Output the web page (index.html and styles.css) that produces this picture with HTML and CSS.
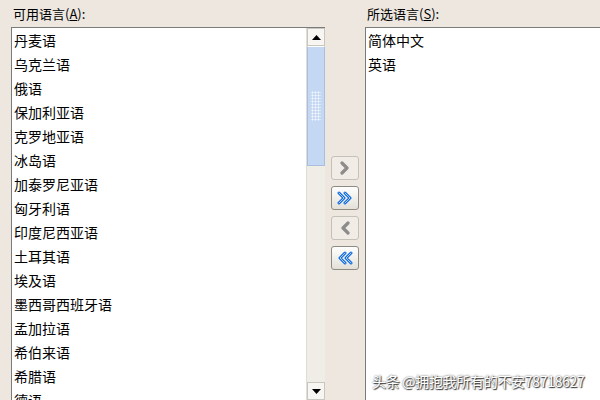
FILE: index.html
```html
<!DOCTYPE html>
<html lang="zh">

<head>
    <meta charset="UTF-8">
    <meta name="viewport" content="width=device-width, initial-scale=1.0">
    <title>语言</title>
    <link rel="stylesheet" href="styles.css">
</head>

<body>
    <div class="dialog">
        <div class="panel left">
            <div class="label">可用语言(<u>A</u>):</div>
            <div class="listbox">
                <ul class="items">
                    <li>丹麦语</li>
                    <li>乌克兰语</li>
                    <li>俄语</li>
                    <li>保加利亚语</li>
                    <li>克罗地亚语</li>
                    <li>冰岛语</li>
                    <li>加泰罗尼亚语</li>
                    <li>匈牙利语</li>
                    <li>印度尼西亚语</li>
                    <li>土耳其语</li>
                    <li>埃及语</li>
                    <li>墨西哥西班牙语</li>
                    <li>孟加拉语</li>
                    <li>希伯来语</li>
                    <li>希腊语</li>
                    <li>德语</li>
                </ul>
                <div class="scrollbar">
                    <div class="sb-btn">
                        <svg width="9" height="5" viewBox="0 0 9 5"><path d="M0 5 L4.5 0 L9 5 Z" fill="#000"/></svg>
                    </div>
                    <div class="thumb">
                        <div class="grip"></div>
                    </div>
                    <div class="track"></div>
                    <div class="sb-btn">
                        <svg width="9" height="5" viewBox="0 0 9 5"><path d="M0 0 L4.5 5 L9 0 Z" fill="#000"/></svg>
                    </div>
                </div>
            </div>
        </div>

        <div class="buttons">
            <div class="btn off">
                <svg width="14" height="14" viewBox="0 0 14 14"><path d="M4 2 L9 7 L4 12" fill="none" stroke="#8c8c8c" stroke-width="3.2" stroke-linejoin="round" stroke-linecap="round"/></svg>
            </div>
            <div class="btn on">
                <svg width="18" height="14" viewBox="0 0 18 14"><path d="M3 2 L8 7 L3 12 M9 2 L14 7 L9 12" fill="none" stroke="#1a6fe0" stroke-width="3" stroke-linejoin="round" stroke-linecap="round"/><path d="M3 2 L8 7 L3 12 M9 2 L14 7 L9 12" fill="none" stroke="#9fd0ff" stroke-width="1" stroke-linejoin="round" stroke-linecap="round"/></svg>
            </div>
            <div class="btn off">
                <svg width="14" height="14" viewBox="0 0 14 14"><path d="M10 2 L5 7 L10 12" fill="none" stroke="#8c8c8c" stroke-width="3.2" stroke-linejoin="round" stroke-linecap="round"/></svg>
            </div>
            <div class="btn on">
                <svg width="18" height="14" viewBox="0 0 18 14"><path d="M15 2 L10 7 L15 12 M9 2 L4 7 L9 12" fill="none" stroke="#1a6fe0" stroke-width="3" stroke-linejoin="round" stroke-linecap="round"/><path d="M15 2 L10 7 L15 12 M9 2 L4 7 L9 12" fill="none" stroke="#9fd0ff" stroke-width="1" stroke-linejoin="round" stroke-linecap="round"/></svg>
            </div>
        </div>

        <div class="panel right">
            <div class="label">所选语言(<u>S</u>):</div>
            <div class="listbox">
                <ul class="items">
                    <li>简体中文</li>
                    <li>英语</li>
                </ul>
            </div>
        </div>
    </div>

    <div class="watermark">头条 @拥抱我所有的不安78718627</div>
</body>

</html>
```

FILE: styles.css
```css
html,
body {
    margin: 0;
    height: 100%;
    overflow: hidden;
}

body {
    background: #ede7e0;
    font-family: "Noto Sans CJK SC", "Liberation Sans", sans-serif;
    color: #000;
}

.dialog {
    display: flex;
    height: 100%;
    padding-left: 11px;
}

.panel {
    display: flex;
    flex-direction: column;
}

.label {
    font-size: 13px;
    line-height: 16px;
    height: 27px;
    padding: 6px 0 0 2px;
    box-sizing: border-box;
}

.label u {
    text-decoration: underline;
}

.left {
    width: 314px;
}

.right {
    flex: 1;
}

.listbox {
    flex: 1;
    display: flex;
    background: #fff;
    border-top: 1px solid #7b7b7b;
    border-left: 1px solid #7b7b7b;
    margin-bottom: -20px;
}

.items {
    list-style: none;
    margin: 0;
    padding: 0 0 0 2px;
    flex: 1;
    font-size: 14px;
    line-height: 24px;
}

.items li {
    height: 24px;
    white-space: nowrap;
}

.scrollbar {
    width: 18px;
    display: flex;
    flex-direction: column;
    background: #f3f1ec;
    border-left: 1px solid #e0ddd6;
    margin-bottom: 20px;
}

.sb-btn {
    height: 18px;
    display: flex;
    align-items: center;
    justify-content: center;
    background: #f7f6f3;
    border: 1px solid #c9c6bd;
    box-sizing: border-box;
}

.thumb {
    height: 120px;
    background: #c4d8f4;
    border: 1px solid #a9bfdf;
    border-top: 1px solid #fff;
    box-sizing: border-box;
    display: flex;
    align-items: center;
    justify-content: center;
}

.grip {
    width: 10px;
    height: 30px;
    margin-top: -1px;
    background-image: radial-gradient(circle, #f5f9ff 0.9px, transparent 1.1px);
    background-size: 3px 3px;
}

.track {
    flex: 1;
    background: #f0ede6;
}

.buttons {
    width: 40px;
    display: flex;
    flex-direction: column;
    align-items: center;
    gap: 6px;
    padding-top: 156px;
}

.btn {
    width: 28px;
    height: 24px;
    box-sizing: border-box;
    border: 1px solid #c4c1b8;
    border-radius: 3px;
    display: flex;
    align-items: center;
    justify-content: center;
}

.btn.off {
    background: #f1ede6;
}

.btn.on {
    background: linear-gradient(#ffffff, #e3e0d8);
    border-color: #8e8b83;
}

.watermark {
    position: absolute;
    left: 372px;
    top: 371px;
    font-size: 14px;
    letter-spacing: -0.3px;
    line-height: 20px;
    color: #fff;
    text-shadow: 0 0 2px #444, 1px 1px 1px #333;
    white-space: nowrap;
}
```
